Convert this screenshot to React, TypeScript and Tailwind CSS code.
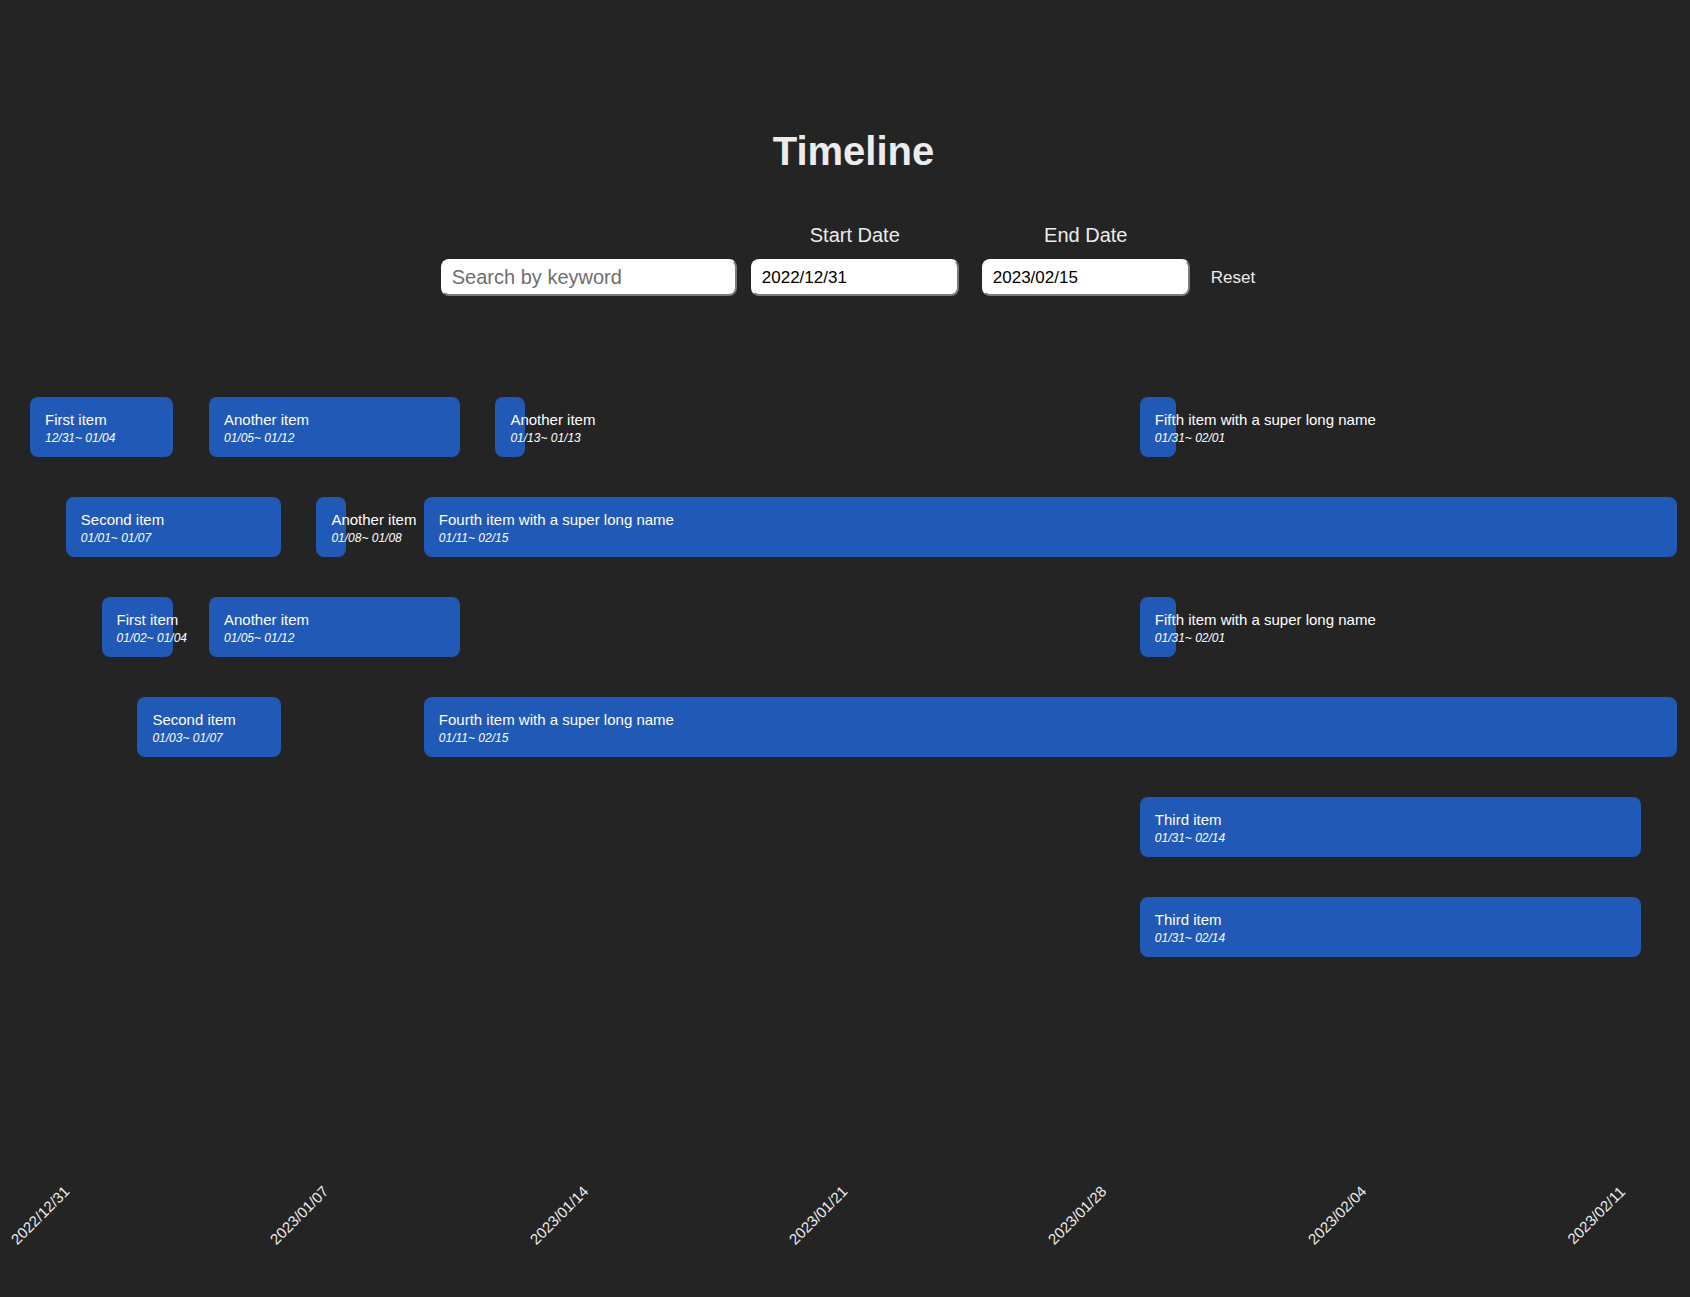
import React, { useState } from 'react'

interface Item {
  name: string
  start: number
  end: number
  label: string
}

const DAY_WIDTH = 35.8
const ORIGIN_X = 30

const ROWS: Item[][] = [
  [
    { name: 'First item', start: 0, end: 4, label: '12/31~ 01/04' },
    { name: 'Another item', start: 5, end: 12, label: '01/05~ 01/12' },
    { name: 'Another item', start: 13, end: 13, label: '01/13~ 01/13' },
    { name: 'Fifth item with a super long name', start: 31, end: 32, label: '01/31~ 02/01' },
  ],
  [
    { name: 'Second item', start: 1, end: 7, label: '01/01~ 01/07' },
    { name: 'Another item', start: 8, end: 8, label: '01/08~ 01/08' },
    { name: 'Fourth item with a super long name', start: 11, end: 46, label: '01/11~ 02/15' },
  ],
  [
    { name: 'First item', start: 2, end: 4, label: '01/02~ 01/04' },
    { name: 'Another item', start: 5, end: 12, label: '01/05~ 01/12' },
    { name: 'Fifth item with a super long name', start: 31, end: 32, label: '01/31~ 02/01' },
  ],
  [
    { name: 'Second item', start: 3, end: 7, label: '01/03~ 01/07' },
    { name: 'Fourth item with a super long name', start: 11, end: 46, label: '01/11~ 02/15' },
  ],
  [{ name: 'Third item', start: 31, end: 45, label: '01/31~ 02/14' }],
  [{ name: 'Third item', start: 31, end: 45, label: '01/31~ 02/14' }],
]

const TICKS = [
  '2022/12/31',
  '2023/01/07',
  '2023/01/14',
  '2023/01/21',
  '2023/01/28',
  '2023/02/04',
  '2023/02/11',
]

function TimelineItem({ item, row }: { item: Item; row: number }) {
  return (
    <div
      className="absolute h-[60px] rounded-[8px] bg-[#2159b6] px-[15px] pt-[14px] whitespace-nowrap text-white"
      style={{
        left: ORIGIN_X + item.start * DAY_WIDTH,
        top: row * 100,
        width: (item.end - item.start) * DAY_WIDTH,
      }}
    >
      <div className="text-[15px] leading-[17px]">{item.name}</div>
      <div className="mt-[3px] text-[12px] italic leading-[14px]">{item.label}</div>
    </div>
  )
}

export default function App() {
  const [keyword, setKeyword] = useState('')
  const [startDate, setStartDate] = useState('2022/12/31')
  const [endDate, setEndDate] = useState('2023/02/15')

  const reset = () => {
    setKeyword('')
    setStartDate('2022/12/31')
    setEndDate('2023/02/15')
  }

  return (
    <div className="min-h-screen w-full overflow-hidden bg-[#242424] pt-[128px] font-['Liberation_Sans',Arial,sans-serif] text-[rgba(255,255,255,0.87)]">
      <h1 className="pl-[17px] text-center text-[40px] font-bold leading-[46px] text-[#ececec]">
        Timeline
      </h1>

      <div className="mt-[50px] flex items-end justify-center pl-[6px]">
        <input
          value={keyword}
          onChange={(e) => setKeyword(e.target.value)}
          placeholder="Search by keyword"
          className="h-[37px] w-[296px] rounded-[8px] border-2 border-t-white border-l-white border-r-[#7a7a7a] border-b-[#7a7a7a] bg-white px-[9px] text-[20px] text-black outline-none placeholder:text-[#6e6e6e]"
        />
        <div className="ml-[14px] flex w-[208px] flex-col items-center">
          <label className="text-[20px] leading-[23px] text-[#ececec]">Start Date</label>
          <input
            value={startDate}
            onChange={(e) => setStartDate(e.target.value)}
            className="mt-[12px] h-[37px] w-[208px] rounded-[8px] border-2 border-t-white border-l-white border-r-[#7a7a7a] border-b-[#7a7a7a] bg-white px-[9px] text-[17px] text-black outline-none"
          />
        </div>
        <div className="ml-[23px] flex w-[208px] flex-col items-center">
          <label className="text-[20px] leading-[23px] text-[#ececec]">End Date</label>
          <input
            value={endDate}
            onChange={(e) => setEndDate(e.target.value)}
            className="mt-[12px] h-[37px] w-[208px] rounded-[8px] border-2 border-t-white border-l-white border-r-[#7a7a7a] border-b-[#7a7a7a] bg-white px-[9px] text-[17px] text-black outline-none"
          />
        </div>
        <button
          onClick={reset}
          className="ml-[21px] flex h-[37px] items-center text-[17px] text-[#ececec]"
        >
          Reset
        </button>
      </div>

      <div className="relative mt-[101px] h-[600px]">
        {ROWS.map((row, r) =>
          row.map((item, i) => <TimelineItem key={`${r}-${i}`} item={item} row={r} />)
        )}
      </div>

      <div className="relative mt-[167px] h-[100px]">
        {TICKS.map((tick, i) => (
          <div
            key={tick}
            className="absolute top-[51px] -translate-x-1/2 -translate-y-1/2 -rotate-45 whitespace-nowrap text-[15px] leading-[17px] text-[#ececec]"
            style={{ left: 40 + i * 259.3 }}
          >
            {tick}
          </div>
        ))}
      </div>
    </div>
  )
}
